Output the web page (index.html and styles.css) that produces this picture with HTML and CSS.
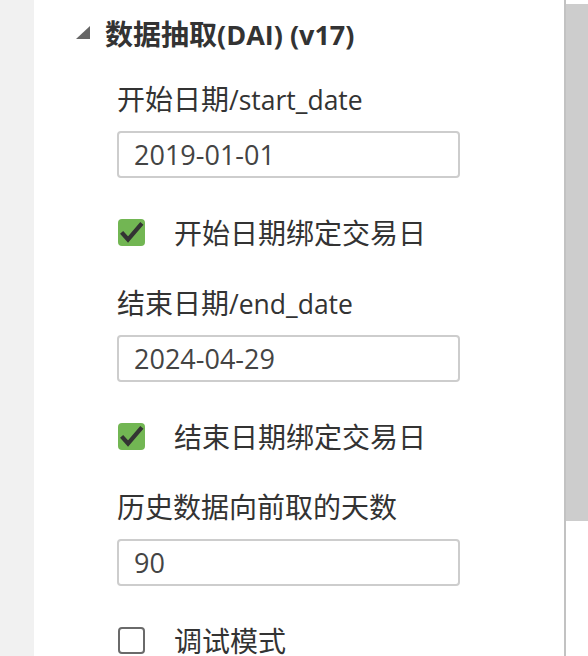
FILE: index.html
```html
<!DOCTYPE html>
<html lang="zh">
<head>
    <meta charset="UTF-8">
    <meta name="viewport" content="width=device-width, initial-scale=1.0">
    <title>数据抽取(DAI)</title>
    <link rel="stylesheet" href="styles.css">
</head>
<body>
    <div class="sidebar"></div>
    <div class="panel">
        <div class="section-title">
            <span class="caret"></span>
            <span>数据抽取<span class="en">(DAI) (v17)</span></span>
        </div>

        <div class="field">
            <label class="field-label" for="start_date">开始日期<span class="en">/start_date</span></label>
            <input class="field-input" type="text" id="start_date" value="2019-01-01">
            <div class="check-row">
                <span class="check checked">
                    <svg width="27" height="27" viewBox="0 0 27 27"><path d="M5 15 L10 20.5 L22.5 6" fill="none" stroke="#333" stroke-width="4.2" stroke-linecap="square"/></svg>
                </span>
                <span>开始日期绑定交易日</span>
            </div>
        </div>

        <div class="field">
            <label class="field-label" for="end_date">结束日期<span class="en">/end_date</span></label>
            <input class="field-input" type="text" id="end_date" value="2024-04-29">
            <div class="check-row">
                <span class="check checked">
                    <svg width="27" height="27" viewBox="0 0 27 27"><path d="M5 15 L10 20.5 L22.5 6" fill="none" stroke="#333" stroke-width="4.2" stroke-linecap="square"/></svg>
                </span>
                <span>结束日期绑定交易日</span>
            </div>
        </div>

        <div class="field">
            <label class="field-label" for="before_days">历史数据向前取的天数</label>
            <input class="field-input" type="text" id="before_days" value="90">
            <div class="check-row">
                <span class="check"></span>
                <span>调试模式</span>
            </div>
        </div>
    </div>
    <div class="scrollbar">
        <div class="thumb"></div>
    </div>
</body>
</html>
```

FILE: styles.css
```css
/* Pagina */
body {
    margin: 0;
    height: 656px;
    overflow: hidden;
    display: flex;
    font-family: 'Open Sans', 'Noto Sans CJK SC', sans-serif;
    font-size: 28px;
    color: #333;
    background: white;
}

.en {
    font-size: 26.5px;
}

.sidebar {
    width: 34px;
    flex-shrink: 0;
    background: #f1f1f1;
}

/* Pannello */
.panel {
    flex: 1;
    padding-top: 13px;
}

.section-title {
    display: flex;
    align-items: center;
    height: 40px;
    padding-left: 42px;
    font-weight: bold;
    color: #333;
}

.section-title .en {
    font-size: 27px;
}

.caret {
    width: 0;
    height: 0;
    border-left: 14px solid transparent;
    border-bottom: 13px solid #666;
    margin-right: 15px;
    margin-top: -1px;
}

.field {
    margin-left: 83px;
    margin-top: 26px;
    width: 343px;
}

.field + .field {
    margin-top: 31px;
}

.field-label {
    display: block;
    height: 40px;
    line-height: 40px;
}

.field-input {
    display: block;
    margin-top: 12px;
    width: 100%;
    height: 47px;
    box-sizing: border-box;
    padding: 0 15px;
    border: 2px solid #cdcdcd;
    border-radius: 4px;
    font-family: 'Open Sans', sans-serif;
    font-size: 27px;
    color: #444;
    outline: none;
}

.check-row {
    display: flex;
    align-items: center;
    height: 40px;
    margin-top: 34px;
    margin-left: 1px;
}

.check {
    width: 27px;
    height: 27px;
    box-sizing: border-box;
    border: 2px solid #6a6a6a;
    border-radius: 4px;
    margin-right: 29px;
    flex-shrink: 0;
}

.check.checked {
    border: none;
    background: #72b653;
}

.check svg {
    display: block;
}

/* Barra di scorrimento */
.scrollbar {
    width: 22px;
    flex-shrink: 0;
    border-left: 2px solid #c2c2c2;
}

.thumb {
    margin-top: 4px;
    height: 517px;
    background: #cdcdcd;
}
```
